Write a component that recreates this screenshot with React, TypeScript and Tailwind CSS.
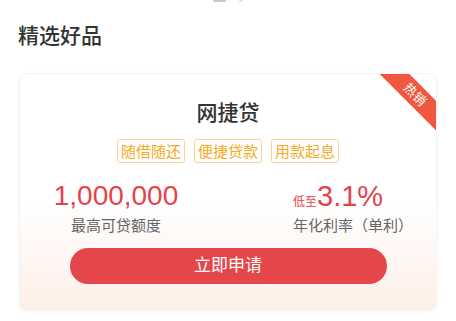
import React from "react";

const tags = ["随借随还", "便捷贷款", "用款起息"];

function HotRibbon() {
  return (
    <div className="absolute right-[-19px] top-[10px] flex h-[21px] w-[80px] rotate-45 items-center justify-center bg-[#f05640] text-[13px] leading-none text-white">
      热销
    </div>
  );
}

export default function App() {
  return (
    <div
      className="min-h-[321px] w-[456px] bg-white text-[#333]"
      style={{ fontFamily: '"Liberation Sans", "Noto Sans CJK SC", sans-serif' }}
    >
      {/* 轮播指示点（上方模块露出的部分） */}
      <div className="flex h-[2px] items-start gap-[13px] pl-[213px]">
        <span className="h-[2px] w-[13px] rounded-full bg-[#c8c8c8]" />
        <span className="h-[2px] w-[4px] rounded-full bg-[#e6e6e6]" />
      </div>

      <h2 className="mt-[23px] pl-[18px] text-[21px] font-medium leading-[21px] text-[#333]">
        精选好品
      </h2>

      <div className="relative mx-[19px] mt-[27px] overflow-hidden rounded-[8px] border border-[#f3f3f3] bg-gradient-to-b from-white from-[55%] to-[#fdefe7] pb-[26px] pt-[28px] shadow-[0_1px_4px_rgba(0,0,0,0.03)]">
        <HotRibbon />

        <div className="text-center text-[21px] font-medium leading-[22px] text-[#333]">
          网捷贷
        </div>

        <div className="mt-[15px] flex justify-center gap-[9px]">
          {tags.map((t) => (
            <span
              key={t}
              className="flex h-[24px] items-center rounded-[3px] border border-[#fdd489] px-[3px] text-[15px] leading-none text-[#f6aa26]"
            >
              {t}
            </span>
          ))}
        </div>

        <div className="mt-[19px] flex">
          <div className="flex w-[192px] flex-col items-center">
            <div className="h-[28px] text-[28px] leading-[28px] text-[#e5434a]">
              1,000,000
            </div>
            <div className="mt-[8px] text-[15px] leading-[15px] text-[#666]">
              最高可贷额度
            </div>
          </div>
          <div className="flex flex-col items-start pl-[81px]">
            <div className="flex h-[28px] items-baseline overflow-visible leading-[28px] text-[#e5434a]">
              <span className="text-[12px]">低至</span>
              <span className="text-[29px]">3.1%</span>
            </div>
            <div className="mt-[8px] text-[15px] leading-[15px] text-[#666]">
              年化利率（单利）
            </div>
          </div>
        </div>

        <button
          type="button"
          className="mx-auto mt-[15px] flex h-[36px] w-[317px] items-center justify-center rounded-full bg-[#e5464a] text-[17px] text-white"
        >
          立即申请
        </button>
      </div>
    </div>
  );
}
